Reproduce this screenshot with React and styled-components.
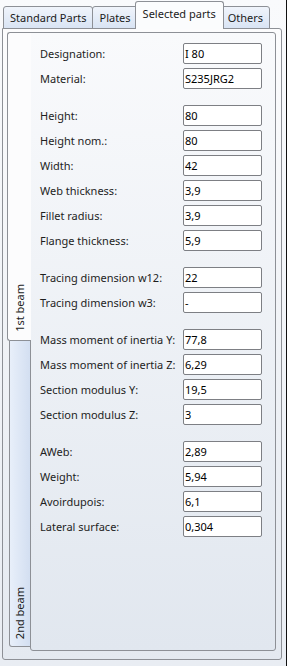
import React from "react";
import styled, { createGlobalStyle } from "styled-components";

const Global = createGlobalStyle`
  html, body { margin: 0; padding: 0; }
  body { font-family: "Noto Sans", "Open Sans", sans-serif; font-size: 11px; color: #1b1b1b; }
  * { box-sizing: border-box; }
`;

const Window = styled.div`
  width: 287px;
  height: 666px;
  background: linear-gradient(#f9fafc, #e9edf3);
  border-right: 1px solid #111;
  display: flex;
  flex-direction: column;
  overflow: hidden;
`;

const TabStrip = styled.div`
  display: flex;
  align-items: flex-end;
  height: 29px;
  padding-left: 3px;
  position: relative;
  z-index: 2;
  margin-bottom: -1px;
`;

const TopTab = styled.div`
  height: ${(p) => (p.$active ? 28 : 23)}px;
  padding: 0 ${(p) => (p.$active ? 7 : 6)}px;
  margin-left: ${(p) => (p.$first ? 0 : p.$active ? -3 : -1)}px;
  margin-right: ${(p) => (p.$active ? -2 : 0)}px;
  border: 1px solid #8d9096;
  border-bottom: ${(p) => (p.$active ? "none" : "1px solid #8d9096")};
  border-radius: 3px 3px 0 0;
  background: ${(p) =>
    p.$active ? "#fbfcfd" : "linear-gradient(#f0f4fb, #d9e4f4)"};
  display: flex;
  align-items: ${(p) => (p.$active ? "flex-start" : "center")};
  padding-top: ${(p) => (p.$active ? 4 : 0)}px;
  white-space: nowrap;
  position: relative;
  z-index: ${(p) => (p.$active ? 2 : 1)};
  color: #1b1b1b;
`;

const OuterPanel = styled.div`
  margin-left: 2px;
  width: 280px;
  height: 632px;
  border: 1px solid #8d9096;
  border-radius: 0 3px 3px 3px;
  background: linear-gradient(#fcfcfd, #e4e9f0);
  padding: 3px 5px 8px 4px;
  display: flex;
`;

const SideTabs = styled.div`
  width: 24px;
  display: flex;
  flex-direction: column;
  position: relative;
  z-index: 2;
  margin-right: -1px;
  padding-bottom: 4px;
`;

const SideTab = styled.div`
  flex: 1;
  margin-left: ${(p) => (p.$active ? 0 : 2)}px;
  border: 1px solid #8d9096;
  border-right: ${(p) => (p.$active ? "none" : "1px solid #8d9096")};
  border-top: ${(p) => (p.$active ? "1px solid #8d9096" : "none")};
  border-radius: ${(p) => (p.$active ? "3px 0 0 3px" : "0 0 0 3px")};
  background: ${(p) =>
    p.$active
      ? "#fcfcfd"
      : "linear-gradient(90deg, #e8effa, #d3dff1)"};
  display: flex;
  flex-direction: column;
  justify-content: flex-end;
  align-items: center;
  padding-bottom: ${(p) => (p.$active ? 8 : 7)}px;
`;

const SideLabel = styled.span`
  writing-mode: vertical-rl;
  transform: rotate(180deg);
  white-space: nowrap;
  line-height: 16px;
`;

const Content = styled.div`
  flex: 1;
  border: 1px solid #8d9096;
  border-radius: 0 3px 3px 3px;
  background: linear-gradient(#f9fafc, #e1e7ef);
  padding: 10px 0 0 9px;
  display: flex;
  flex-direction: column;
  gap: 16px;
`;

const Group = styled.div`
  display: grid;
  grid-template-columns: 143px 79px;
  row-gap: 4px;
`;

const Label = styled.div`
  height: 21px;
  display: flex;
  align-items: center;
  white-space: nowrap;
  color: #1e1e1e;
`;

const Field = styled.div`
  height: 21px;
  border: 1px solid #7d7f84;
  border-radius: 2px;
  background: #fff;
  padding-left: 1px;
  display: flex;
  align-items: center;
  color: #000;
`;

const groups = [
  [["Designation:", "I 80"], ["Material:", "S235JRG2"]],
  [
    ["Height:", "80"],
    ["Height nom.:", "80"],
    ["Width:", "42"],
    ["Web thickness:", "3,9"],
    ["Fillet radius:", "3,9"],
    ["Flange thickness:", "5,9"],
  ],
  [["Tracing dimension w12:", "22"], ["Tracing dimension w3:", "-"]],
  [
    ["Mass moment of inertia Y:", "77,8"],
    ["Mass moment of inertia Z:", "6,29"],
    ["Section modulus Y:", "19,5"],
    ["Section modulus Z:", "3"],
  ],
  [
    ["AWeb:", "2,89"],
    ["Weight:", "5,94"],
    ["Avoirdupois:", "6,1"],
    ["Lateral surface:", "0,304"],
  ],
];

const tabs = ["Standard Parts", "Plates", "Selected parts", "Others"];

export default function App() {
  return (
    <>
      <Global />
      <Window>
        <TabStrip>
          {tabs.map((t, i) => (
            <TopTab key={t} $active={i === 2} $first={i === 0}>
              {t}
            </TopTab>
          ))}
        </TabStrip>
        <OuterPanel>
          <SideTabs>
            <SideTab $active>
              <SideLabel>1st beam</SideLabel>
            </SideTab>
            <SideTab>
              <SideLabel>2nd beam</SideLabel>
            </SideTab>
          </SideTabs>
          <Content>
            {groups.map((g, gi) => (
              <Group key={gi}>
                {g.map(([l, v]) => (
                  <React.Fragment key={l}>
                    <Label>{l}</Label>
                    <Field>{v}</Field>
                  </React.Fragment>
                ))}
              </Group>
            ))}
          </Content>
        </OuterPanel>
      </Window>
    </>
  );
}
